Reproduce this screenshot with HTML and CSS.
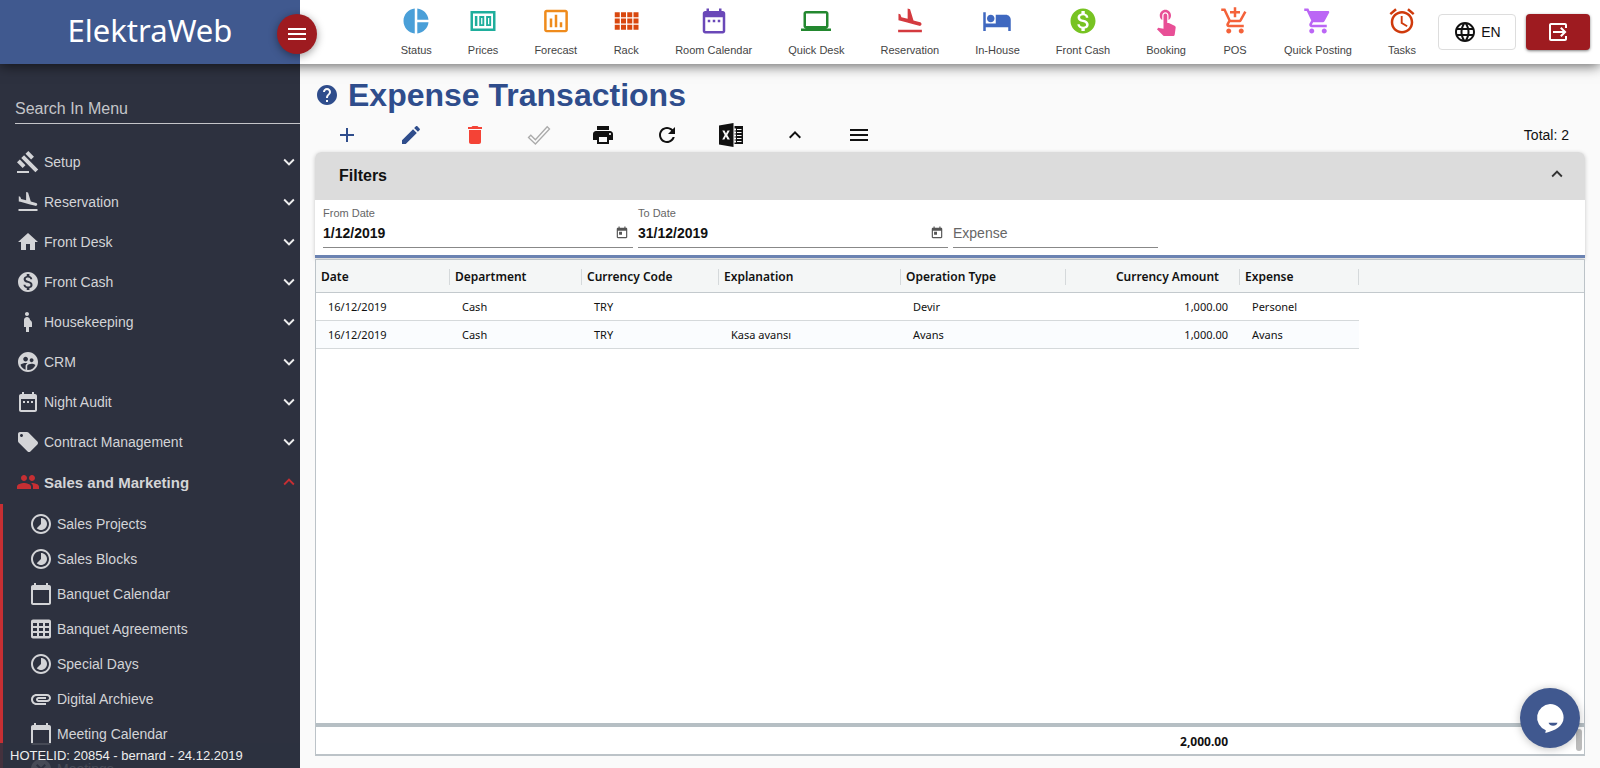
FILE: index.html
```html
<!DOCTYPE html>
<html lang="en">

<head>
  <meta charset="UTF-8">
  <meta name="viewport" content="width=device-width, initial-scale=1.0">
  <title>ElektraWeb - Expense Transactions</title>
  <link rel="stylesheet" href="styles.css">
</head>

<body>

  <!-- icons -->
  <svg class="sprite" aria-hidden="true">
    <symbol id="i-menu" viewBox="0 0 24 24"><path d="M3 18h18v-2H3v2zm0-5h18v-2H3v2zm0-7v2h18V6H3z"/></symbol>
    <symbol id="i-status" viewBox="0 0 24 24"><path d="M11 2v20c-5.07-.5-9-4.79-9-10s3.93-9.5 9-10zm2.03 0v8.99H22c-.47-4.74-4.24-8.52-8.97-8.99zm0 11.01V22c4.74-.47 8.5-4.25 8.97-8.99h-8.97z"/></symbol>
    <symbol id="i-prices" viewBox="0 0 24 24"><path fill-rule="evenodd" d="M2 4h20v16H2zM4 6v12h16V6zM5.500 8h2v8h-2zM9 8h4v8H9zM10.500 9.500v5h1v-5zM14.500 8h4v8h-4zM16 9.500v5h1v-5z"/></symbol>
    <symbol id="i-forecast" viewBox="0 0 24 24"><path d="M9 17H7v-7h2v7zm4 0h-2V7h2v10zm4 0h-2v-4h2v4zm2.500 2.100h-15V5h15v14.100zm0-16.100h-15c-1.100 0-2 .9-2 2v14c0 1.100.9 2 2 2h15c1.100 0 2-.9 2-2V5c0-1.100-.9-2-2-2z"/></symbol>
    <symbol id="i-rack" viewBox="0 0 24 24"><path d="M3 9h4V5H3v4zm0 5h4v-4H3v4zm5 0h4v-4H8v4zm5 0h4v-4h-4v4zM8 9h4V5H8v4zm5-4v4h4V5h-4zm5 9h4v-4h-4v4zM3 19h4v-4H3v4zm5 0h4v-4H8v4zm5 0h4v-4h-4v4zm5 0h4v-4h-4v4zm0-14v4h4V5h-4z"/></symbol>
    <symbol id="i-date-range" viewBox="0 0 24 24"><path d="M9 11H7v2h2v-2zm4 0h-2v2h2v-2zm4 0h-2v2h2v-2zm2-7h-1V2h-2v2H8V2H6v2H5c-1.110 0-1.990.9-1.990 2L3 20c0 1.100.89 2 2 2h14c1.100 0 2-.9 2-2V6c0-1.100-.9-2-2-2zm0 16H5V9h14v11z"/></symbol>
    <symbol id="i-laptop" viewBox="0 0 24 24"><path d="M20 18c1.100 0 1.990-.9 1.990-2L22 6c0-1.100-.9-2-2-2H4c-1.100 0-2 .9-2 2v10c0 1.100.9 2 2 2H0v2h24v-2h-4zM4 6h16v10H4V6z"/></symbol>
    <symbol id="i-flight" viewBox="0 0 24 24"><path d="M2.500 19h19v2h-19zm7.180-5.730l4.350 1.160 5.310 1.420c.8.21 1.620-.26 1.840-1.060.21-.8-.26-1.620-1.060-1.840l-5.310-1.420-2.760-9.020L10.120 2v8.280L5.150 8.950l-.93-2.320-1.450-.39v5.170l1.600.43 5.310 1.430z"/></symbol>
    <symbol id="i-hotel" viewBox="0 0 24 24"><path d="M7 13c1.660 0 3-1.340 3-3S8.660 7 7 7s-3 1.340-3 3 1.340 3 3 3zm12-6h-8v7H3V5H1v15h2v-3h18v3h2v-9c0-2.210-1.790-4-4-4z"/></symbol>
    <symbol id="i-money" viewBox="0 0 24 24"><path d="M12 2C6.480 2 2 6.480 2 12s4.480 10 10 10 10-4.480 10-10S17.520 2 12 2zm1.410 16.090V20h-2.670v-1.930c-1.710-.36-3.160-1.460-3.270-3.400h1.960c.1 1.050.82 1.870 2.650 1.870 1.960 0 2.400-.98 2.400-1.590 0-.83-.44-1.610-2.670-2.140-2.480-.6-4.180-1.620-4.180-3.670 0-1.720 1.390-2.840 3.110-3.210V4h2.670v1.950c1.860.45 2.790 1.860 2.850 3.390H14.300c-.05-1.110-.64-1.870-2.220-1.870-1.500 0-2.400.68-2.400 1.640 0 .84.65 1.390 2.670 1.910s4.180 1.390 4.180 3.910c-.01 1.830-1.380 2.830-3.120 3.160z"/></symbol>
    <symbol id="i-touch" viewBox="0 0 24 24"><path d="M9 11.240V7.500C9 6.120 10.120 5 11.500 5S14 6.120 14 7.500v3.740c1.210-.81 2-2.180 2-3.740C16 5.010 13.990 3 11.500 3S7 5.010 7 7.500c0 1.560.79 2.930 2 3.740zm9.840 4.630l-4.540-2.260c-.17-.07-.35-.11-.54-.11H13v-6c0-.83-.67-1.500-1.500-1.500S10 6.670 10 7.500v10.740l-3.430-.72c-.08-.01-.15-.03-.24-.03-.31 0-.59.13-.79.33l-.79.8 4.940 4.940c.27.27.65.44 1.060.44h6.790c.75 0 1.330-.55 1.440-1.280l.75-5.270c.01-.07.02-.14.02-.2 0-.62-.38-1.160-.91-1.380z"/></symbol>
    <symbol id="i-cart-add" viewBox="0 0 24 24"><path d="M11 9h2V6h3V4h-3V1h-2v3H8v2h3v3zm-4 9c-1.100 0-1.990.9-1.990 2S5.900 22 7 22s2-.9 2-2-.9-2-2-2zm10 0c-1.100 0-1.990.9-1.990 2s.89 2 1.990 2 2-.9 2-2-.9-2-2-2zm-9.830-3.250l.03-.12.9-1.630h7.450c.75 0 1.410-.41 1.750-1.030l3.860-7.010L19.420 4h-.01l-1.100 2-2.760 5H8.530l-.13-.27L6.160 6l-.95-2-.94-2H1v2h2l3.600 7.590-1.350 2.450c-.16.28-.25.61-.25.96 0 1.100.9 2 2 2h12v-2H7.420c-.13 0-.25-.11-.25-.25z"/></symbol>
    <symbol id="i-cart" viewBox="0 0 24 24"><path d="M7 18c-1.100 0-1.990.9-1.990 2S5.900 22 7 22s2-.9 2-2-.9-2-2-2zM1 2v2h2l3.600 7.590-1.350 2.450c-.16.28-.25.61-.25.96 0 1.100.9 2 2 2h12v-2H7.420c-.14 0-.25-.11-.25-.25l.03-.12.9-1.630h7.450c.75 0 1.410-.41 1.750-1.030l3.580-6.490c.08-.14.12-.31.12-.48 0-.55-.45-1-1-1H5.210l-.94-2H1zm16 16c-1.100 0-1.990.9-1.990 2s.89 2 1.990 2 2-.9 2-2-.9-2-2-2z"/></symbol>
    <symbol id="i-alarm" viewBox="0 0 24 24"><path d="M22 5.720l-4.600-3.860-1.290 1.530 4.600 3.860L22 5.720zM7.880 3.390L6.600 1.860 2 5.710l1.290 1.530 4.590-3.850zM12.500 8H11v6l4.750 2.850.75-1.230-4-2.370V8zM12 4c-4.970 0-9 4.030-9 9s4.020 9 9 9c4.970 0 9-4.030 9-9s-4.030-9-9-9zm0 16c-3.870 0-7-3.130-7-7s3.130-7 7-7 7 3.130 7 7-3.130 7-7 7z"/></symbol>
    <symbol id="i-globe" viewBox="0 0 24 24"><path d="M11.990 2C6.470 2 2 6.480 2 12s4.470 10 9.990 10C17.520 22 22 17.520 22 12S17.520 2 11.990 2zm6.930 6h-2.950c-.32-1.250-.78-2.450-1.380-3.560 1.840.63 3.370 1.910 4.330 3.560zM12 4.040c.83 1.200 1.480 2.530 1.910 3.960h-3.820c.43-1.430 1.080-2.760 1.910-3.960zM4.260 14C4.100 13.360 4 12.690 4 12s.1-1.360.26-2h3.380c-.08.66-.14 1.320-.14 2 0 .68.06 1.340.14 2H4.260zm.82 2h2.950c.32 1.250.78 2.450 1.380 3.560-1.840-.63-3.370-1.900-4.330-3.560zm2.950-8H5.080c.96-1.660 2.490-2.930 4.330-3.560C8.810 5.550 8.350 6.750 8.030 8zM12 19.960c-.83-1.200-1.480-2.530-1.910-3.960h3.820c-.43 1.430-1.080 2.760-1.910 3.960zM14.340 14H9.660c-.09-.66-.16-1.320-.16-2 0-.68.07-1.350.16-2h4.680c.09.65.16 1.320.16 2 0 .68-.07 1.340-.16 2zm.25 5.560c.6-1.110 1.060-2.310 1.380-3.560h2.950c-.96 1.650-2.490 2.930-4.330 3.560zM16.360 14c.08-.66.14-1.320.14-2 0-.68-.06-1.340-.14-2h3.380c.16.64.26 1.310.26 2s-.1 1.360-.26 2h-3.380z"/></symbol>
    <symbol id="i-exit" viewBox="0 0 24 24"><path d="M14.100 15.600l1.400 1.400 5-5-5-5-1.400 1.400 2.600 2.600H7v2h9.700zM5 3c-1.100 0-2 .9-2 2v14c0 1.100.9 2 2 2h14c1.100 0 2-.9 2-2v-3h-2v3H5V5h14v3h2V5c0-1.100-.9-2-2-2z"/></symbol>
    <symbol id="i-help" viewBox="0 0 24 24"><path d="M12 2C6.480 2 2 6.480 2 12s4.480 10 10 10 10-4.480 10-10S17.520 2 12 2zm1 17h-2v-2h2v2zm2.070-7.750l-.9.920C13.450 12.900 13 13.500 13 15h-2v-.5c0-1.100.45-2.100 1.170-2.830l1.240-1.260c.37-.36.59-.86.59-1.410 0-1.100-.9-2-2-2s-2 .9-2 2H8c0-2.210 1.790-4 4-4s4 1.790 4 4c0 .88-.36 1.680-.93 2.250z"/></symbol>
    <symbol id="i-add" viewBox="0 0 24 24"><path d="M19 13h-6v6h-2v-6H5v-2h6V5h2v6h6v2z"/></symbol>
    <symbol id="i-edit" viewBox="0 0 24 24"><path d="M3 17.250V21h3.750L17.810 9.940l-3.750-3.750L3 17.250zM20.710 7.040c.39-.39.39-1.020 0-1.410l-2.340-2.340c-.39-.39-1.020-.39-1.410 0l-1.830 1.830 3.750 3.750 1.830-1.830z"/></symbol>
    <symbol id="i-delete" viewBox="0 0 24 24"><path d="M6 19c0 1.100.9 2 2 2h8c1.100 0 2-.9 2-2V7H6v12zM19 4h-3.500l-1-1h-5l-1 1H5v2h14V4z"/></symbol>
    <symbol id="i-check" viewBox="0 0 24 24"><path fill="none" stroke="currentColor" stroke-width="1.300" d="M1.500 14.500l2.300-2.300 4.600 4.600L20.200 3.800l2.300 2.200L8.400 21z"/></symbol>
    <symbol id="i-print" viewBox="0 0 24 24"><path d="M19 8H5c-1.660 0-3 1.340-3 3v6h4v4h12v-4h4v-6c0-1.660-1.340-3-3-3zm-3 11H8v-5h8v5zm3-7c-.55 0-1-.45-1-1s.45-1 1-1 1 .45 1 1-.45 1-1 1zm-1-9H6v4h12V3z"/></symbol>
    <symbol id="i-refresh" viewBox="0 0 24 24"><path d="M17.650 6.350C16.200 4.900 14.210 4 12 4c-4.420 0-7.990 3.580-7.990 8s3.570 8 7.990 8c3.730 0 6.840-2.550 7.730-6h-2.080c-.82 2.330-3.040 4-5.650 4-3.310 0-6-2.690-6-6s2.690-6 6-6c1.660 0 3.140.69 4.220 1.780L13 11h7V4l-2.350 2.350z"/></symbol>
    <symbol id="i-excel" viewBox="0 0 24 24"><path fill-rule="evenodd" d="M0 2.500L14.500 0v24L0 21.500zM3.300 7.600l2.400 4.400-2.500 4.400h2.200l1.500-2.900 1.600 3h2.400L8.300 12l2.500-4.600H8.500L7 10.400 5.500 7.600zM15.500 3H24v18h-8.500v-1.500H17v-2h-1.500v-1H17v-2h-1.500v-1H17v-2h-1.500v-1H17v-2h-1.500v-1H17v-2h-1.500zM18 6v1h4.500v-1zM18 9v1h4.500v-1zM18 12v1h4.500v-1zM18 15v1h4.500v-1zM18 18v1h4.500v-1z"/></symbol>
    <symbol id="i-up" viewBox="0 0 24 24"><path d="M12 8l-6 6 1.410 1.410L12 10.830l4.590 4.580L18 14z"/></symbol>
    <symbol id="i-down" viewBox="0 0 24 24"><path d="M16.590 8.590L12 13.170 7.410 8.590 6 10l6 6 6-6z"/></symbol>
    <symbol id="i-gavel" viewBox="0 0 24 24"><path d="M1 21h12v2H1zM5.245 8.070l2.830-2.827 14.140 14.142-2.828 2.828zM12.317 1l5.657 5.656-2.830 2.830-5.654-5.660zM3.825 9.485l5.657 5.657-2.828 2.828-5.657-5.657z"/></symbol>
    <symbol id="i-home" viewBox="0 0 24 24"><path d="M10 20v-6h4v6h5v-8h3L12 3 2 12h3v8z"/></symbol>
    <symbol id="i-woman" viewBox="0 0 24 24"><path d="M9 4c0-1.110.89-2 2-2s2 .89 2 2-.89 2-2 2-2-.89-2-2zm7 9c-.01-1.340-.83-2.510-2-3 0-1.660-1.340-3-3-3s-3 1.340-3 3v7h2v5h3v-5h3v-4z"/></symbol>
    <symbol id="i-crm" viewBox="0 0 24 24"><path d="M11.990 2c-5.520 0-10 4.480-10 10s4.480 10 10 10 10-4.480 10-10-4.480-10-10-10zm3.610 6.340c1.070 0 1.930.86 1.930 1.930 0 1.070-.86 1.930-1.930 1.930-1.070 0-1.930-.86-1.930-1.930-.01-1.070.86-1.930 1.930-1.930zm-6-1.580c1.300 0 2.360 1.060 2.360 2.360 0 1.300-1.060 2.360-2.360 2.360s-2.360-1.060-2.360-2.360c0-1.310 1.050-2.360 2.360-2.360zm0 9.130v3.750c-2.400-.75-4.300-2.600-5.140-4.960 1.050-1.120 3.670-1.690 5.140-1.690.53 0 1.200.08 1.900.22-1.640.87-1.900 2.020-1.900 2.680zM11.990 20c-.27 0-.53-.01-.79-.04v-4.070c0-1.420 2.940-2.130 4.400-2.130 1.070 0 2.920.39 3.840 1.150-1.170 2.970-4.060 5.090-7.450 5.090z"/></symbol>
    <symbol id="i-tag" viewBox="0 0 24 24"><path d="M21.410 11.580l-9-9C12.050 2.220 11.550 2 11 2H4c-1.100 0-2 .9-2 2v7c0 .55.22 1.050.59 1.420l9 9c.36.36.86.58 1.410.58.55 0 1.050-.22 1.410-.59l7-7c.37-.36.59-.86.59-1.410 0-.55-.23-1.060-.59-1.420zM5.500 7C4.670 7 4 6.330 4 5.500S4.670 4 5.500 4 7 4.670 7 5.500 6.330 7 5.500 7z"/></symbol>
    <symbol id="i-people" viewBox="0 0 24 24"><path d="M16 11c1.660 0 2.990-1.340 2.990-3S17.660 5 16 5c-1.660 0-3 1.340-3 3s1.340 3 3 3zm-8 0c1.660 0 2.990-1.340 2.990-3S9.660 5 8 5C6.340 5 5 6.340 5 8s1.340 3 3 3zm0 2c-2.330 0-7 1.170-7 3.500V19h14v-2.500c0-2.330-4.670-3.500-7-3.500zm8 0c-.29 0-.62.02-.97.05 1.160.84 1.970 1.970 1.970 3.450V19h6v-2.500c0-2.330-4.670-3.500-7-3.500z"/></symbol>
    <symbol id="i-timelapse" viewBox="0 0 24 24"><path d="M16.240 7.760C15.070 6.590 13.540 6 12 6v6l-4.240 4.240c2.340 2.340 6.140 2.340 8.490 0 2.340-2.340 2.340-6.140-.01-8.480zM12 2C6.480 2 2 6.480 2 12s4.480 10 10 10 10-4.480 10-10S17.520 2 12 2zm0 18c-4.420 0-8-3.580-8-8s3.580-8 8-8 8 3.580 8 8-3.580 8-8 8z"/></symbol>
    <symbol id="i-calendar" viewBox="0 0 24 24"><path d="M20 3h-1V1h-2v2H7V1H5v2H4c-1.100 0-2 .9-2 2v16c0 1.100.9 2 2 2h16c1.100 0 2-.9 2-2V5c0-1.100-.9-2-2-2zm0 18H4V8h16v13z"/></symbol>
    <symbol id="i-table" viewBox="0 0 24 24"><path fill-rule="evenodd" d="M4 2.500h16c1.100 0 2 .9 2 2v15c0 1.100-.9 2-2 2H4c-1.100 0-2-.9-2-2v-15c0-1.100.9-2 2-2zM4 6v3h4V6zM10 6v3h4V6zM16 6v3h4V6zM4 11v3h4v-3zM10 11v3h4v-3zM16 11v3h4v-3zM4 16v3h4v-3zM10 16v3h4v-3zM16 16v3h4v-3z"/></symbol>
    <symbol id="i-attach" viewBox="0 0 24 24"><path d="M2 12.500C2 9.460 4.460 7 7.500 7H18c2.210 0 4 1.790 4 4s-1.790 4-4 4H9.500C8.120 15 7 13.880 7 12.500S8.120 10 9.500 10H17v2H9.410c-.55 0-.55 1 0 1H18c1.100 0 2-.9 2-2s-.9-2-2-2H7.500C5.570 9 4 10.570 4 12.500S5.570 16 7.500 16H17v2H7.500C4.460 18 2 15.540 2 12.500z"/></symbol>
    <symbol id="i-event" viewBox="0 0 24 24"><path d="M19 3h-1V1h-2v2H8V1H6v2H5c-1.100 0-2 .9-2 2v14c0 1.100.9 2 2 2h14c1.100 0 2-.9 2-2V5c0-1.100-.9-2-2-2zm0 16H5V8h14v11zM7 10h5v5H7z"/></symbol>
    <symbol id="i-cancel" viewBox="0 0 24 24"><path d="M12 2C6.500 2 2 6.500 2 12s4.500 10 10 10 10-4.500 10-10S17.500 2 12 2zm5 13.600L15.600 17 12 13.400 8.400 17 7 15.600l3.600-3.600L7 8.400 8.400 7l3.600 3.600L15.600 7 17 8.400 13.400 12z"/></symbol>
    <symbol id="i-chat" viewBox="0 0 32 32"><path fill="#fff" d="M16 1a14.500 14.500 0 0 1 14.500 14.500C30.500 25 21 29.500 11 32l.5-3A14.500 14.500 0 0 1 16 1z"/><path fill="#40588f" d="M14.500 21h9.500c-.5 2-2.300 3.200-4.700 3.200S15 23 14.500 21z"/></symbol>
  </svg>

  <header class="topbar">
    <a class="brand" href="#">ElektraWeb</a>
    <button class="menu-toggle" type="button" aria-label="Menu"><svg class="icon"><use href="#i-menu"/></svg></button>
    <nav class="shortcuts">
      <a class="status" href="#"><svg class="icon-lg"><use href="#i-status"/></svg>Status</a>
      <a class="prices" href="#"><svg class="icon-lg"><use href="#i-prices"/></svg>Prices</a>
      <a class="forecast" href="#"><svg class="icon-lg"><use href="#i-forecast"/></svg>Forecast</a>
      <a class="rack" href="#"><svg class="icon-lg"><use href="#i-rack"/></svg>Rack</a>
      <a class="room-calendar" href="#"><svg class="icon-lg"><use href="#i-date-range"/></svg>Room Calendar</a>
      <a class="quick-desk" href="#"><svg class="icon-lg"><use href="#i-laptop"/></svg>Quick Desk</a>
      <a class="reservation" href="#"><svg class="icon-lg"><use href="#i-flight"/></svg>Reservation</a>
      <a class="in-house" href="#"><svg class="icon-lg"><use href="#i-hotel"/></svg>In-House</a>
      <a class="front-cash" href="#"><svg class="icon-lg"><use href="#i-money"/></svg>Front Cash</a>
      <a class="booking" href="#"><svg class="icon-lg"><use href="#i-touch"/></svg>Booking</a>
      <a class="pos" href="#"><svg class="icon-lg"><use href="#i-cart-add"/></svg>POS</a>
      <a class="quick-posting" href="#"><svg class="icon-lg"><use href="#i-cart"/></svg>Quick Posting</a>
      <a class="tasks" href="#"><svg class="icon-lg"><use href="#i-alarm"/></svg>Tasks</a>
    </nav>
    <button class="btn-lang" type="button"><svg class="icon"><use href="#i-globe"/></svg>EN</button>
    <button class="btn-exit" type="button" aria-label="Log out"><svg class="icon"><use href="#i-exit"/></svg></button>
  </header>

  <div class="layout">
    <aside class="sidebar">
      <input class="menu-search" type="text" placeholder="Search In Menu" aria-label="Search In Menu">
      <ul class="menu">
        <li><a href="#"><svg class="icon"><use href="#i-gavel"/></svg>Setup<svg class="arrow"><use href="#i-down"/></svg></a></li>
        <li><a href="#"><svg class="icon"><use href="#i-flight"/></svg>Reservation<svg class="arrow"><use href="#i-down"/></svg></a></li>
        <li><a href="#"><svg class="icon"><use href="#i-home"/></svg>Front Desk<svg class="arrow"><use href="#i-down"/></svg></a></li>
        <li><a href="#"><svg class="icon"><use href="#i-money"/></svg>Front Cash<svg class="arrow"><use href="#i-down"/></svg></a></li>
        <li><a href="#"><svg class="icon"><use href="#i-woman"/></svg>Housekeeping<svg class="arrow"><use href="#i-down"/></svg></a></li>
        <li><a href="#"><svg class="icon"><use href="#i-crm"/></svg>CRM<svg class="arrow"><use href="#i-down"/></svg></a></li>
        <li><a href="#"><svg class="icon"><use href="#i-date-range"/></svg>Night Audit<svg class="arrow"><use href="#i-down"/></svg></a></li>
        <li><a href="#"><svg class="icon"><use href="#i-tag"/></svg>Contract Management<svg class="arrow"><use href="#i-down"/></svg></a></li>
        <li class="open"><a href="#"><svg class="icon"><use href="#i-people"/></svg>Sales and Marketing<svg class="arrow"><use href="#i-up"/></svg></a></li>
      </ul>
      <ul class="submenu">
        <li><a href="#"><svg class="icon"><use href="#i-timelapse"/></svg>Sales Projects</a></li>
        <li><a href="#"><svg class="icon"><use href="#i-timelapse"/></svg>Sales Blocks</a></li>
        <li><a href="#"><svg class="icon"><use href="#i-calendar"/></svg>Banquet Calendar</a></li>
        <li><a href="#"><svg class="icon"><use href="#i-table"/></svg>Banquet Agreements</a></li>
        <li><a href="#"><svg class="icon"><use href="#i-timelapse"/></svg>Special Days</a></li>
        <li><a href="#"><svg class="icon"><use href="#i-attach"/></svg>Digital Archieve</a></li>
        <li><a href="#"><svg class="icon"><use href="#i-calendar"/></svg>Meeting Calendar</a></li>
        <li><a href="#"><svg class="icon"><use href="#i-cancel"/></svg>Meetings</a></li>
      </ul>
      <div class="hotel-info">HOTELID: 20854 - bernard - 24.12.2019</div>
    </aside>

    <main class="content">
      <div class="page-title">
        <svg class="icon"><use href="#i-help"/></svg>
        <h1>Expense Transactions</h1>
      </div>

      <div class="toolbar">
        <button class="blue" type="button" aria-label="Add"><svg class="icon"><use href="#i-add"/></svg></button>
        <button class="blue" type="button" aria-label="Edit"><svg class="icon"><use href="#i-edit"/></svg></button>
        <button class="red" type="button" aria-label="Delete"><svg class="icon"><use href="#i-delete"/></svg></button>
        <button class="grey" type="button" aria-label="Approve"><svg class="icon"><use href="#i-check"/></svg></button>
        <button type="button" aria-label="Print"><svg class="icon"><use href="#i-print"/></svg></button>
        <button type="button" aria-label="Refresh"><svg class="icon"><use href="#i-refresh"/></svg></button>
        <button type="button" aria-label="Export to Excel"><svg class="icon"><use href="#i-excel"/></svg></button>
        <button type="button" aria-label="Collapse"><svg class="icon"><use href="#i-up"/></svg></button>
        <button type="button" aria-label="More"><svg class="icon"><use href="#i-menu"/></svg></button>
        <span class="total">Total: 2</span>
      </div>

      <section class="filters">
        <div class="filters-head">
          <h2>Filters</h2>
          <button type="button" aria-label="Hide filters"><svg class="arrow"><use href="#i-up"/></svg></button>
        </div>
        <form class="filters-body" action="#">
          <div class="field">
            <label for="from">From Date</label>
            <div class="control">
              <input type="text" id="from" value="1/12/2019">
              <svg class="icon-sm"><use href="#i-event"/></svg>
            </div>
          </div>
          <div class="field">
            <label for="to">To Date</label>
            <div class="control">
              <input type="text" id="to" value="31/12/2019">
              <svg class="icon-sm"><use href="#i-event"/></svg>
            </div>
          </div>
          <div class="field small">
            <div class="control">
              <input type="text" id="expense" placeholder="Expense" aria-label="Expense">
            </div>
          </div>
        </form>
      </section>

      <section class="grid">
        <div class="grid-body">
          <table>
            <colgroup>
              <col class="c-date"><col class="c-dep"><col class="c-cur"><col class="c-exp"><col class="c-type"><col class="c-amount"><col class="c-expense"><col>
            </colgroup>
            <thead>
              <tr>
                <th><span>Date</span></th>
                <th><span>Department</span></th>
                <th><span>Currency Code</span></th>
                <th><span>Explanation</span></th>
                <th><span>Operation Type</span></th>
                <th class="num"><span>Currency Amount</span></th>
                <th><span>Expense</span></th>
                <th></th>
              </tr>
            </thead>
            <tbody>
              <tr>
                <td>16/12/2019</td>
                <td>Cash</td>
                <td>TRY</td>
                <td></td>
                <td>Devir</td>
                <td class="num">1,000.00</td>
                <td>Personel</td>
              </tr>
              <tr>
                <td>16/12/2019</td>
                <td>Cash</td>
                <td>TRY</td>
                <td>Kasa avansı</td>
                <td>Avans</td>
                <td class="num">1,000.00</td>
                <td>Avans</td>
              </tr>
            </tbody>
          </table>
        </div>
        <div class="grid-total">
          <span>2,000.00</span>
          <i class="scroll-thumb"></i>
        </div>
      </section>
    </main>
  </div>

  <button class="chat" type="button" aria-label="Chat"><svg><use href="#i-chat"/></svg></button>

</body>

</html>
```
FILE: styles.css
```css
* {
  box-sizing: border-box;
}

body {
  margin: 0;
  height: 100vh;
  display: flex;
  flex-direction: column;
  overflow: hidden;
  background-color: #fafafa;
  color: #111;
  font-family: "Liberation Sans", Arial, sans-serif;
  font-size: 14px;
}

a {
  color: inherit;
  text-decoration: none;
}

button {
  display: flex;
  align-items: center;
  justify-content: center;
  padding: 0;
  border: none;
  background: none;
  color: inherit;
  font: inherit;
  cursor: pointer;
}

input {
  min-width: 0;
  padding: 0;
  border: none;
  outline: none;
  background: none;
  color: inherit;
  font: inherit;
}

ul {
  list-style-type: none;
  margin: 0;
  padding: 0;
}

svg {
  flex: none;
  fill: currentColor;
}

.sprite {
  position: absolute;
  width: 0;
  height: 0;
}

.icon {
  width: 24px;
  height: 24px;
}

.icon-lg {
  width: 30px;
  height: 30px;
}

.icon-sm {
  width: 14px;
  height: 14px;
  color: #555;
}

.arrow {
  width: 22px;
  height: 22px;
}

/* top bar */

.topbar {
  position: relative;
  z-index: 2;
  flex: none;
  display: flex;
  height: 64px;
  padding-right: 10px;
  background-color: #fff;
  box-shadow: 0 2px 12px rgba(0, 0, 0, 0.6);
}

.brand {
  flex: none;
  width: 300px;
  background-color: #40598f;
  color: #fff;
  font-family: "Noto Sans", sans-serif;
  font-size: 31px;
  line-height: 60px;
  text-align: center;
}

.menu-toggle {
  position: absolute;
  top: 14px;
  left: 277px;
  width: 40px;
  height: 40px;
  border-radius: 50%;
  background-color: #9e1b20;
  color: #fff;
  box-shadow: 0 2px 8px rgba(0, 0, 0, 0.4);
}

.shortcuts {
  flex: 1;
  display: flex;
  justify-content: flex-end;
  gap: 36px;
  margin-right: 22px;
}

.shortcuts a {
  display: flex;
  flex-direction: column;
  align-items: center;
  gap: 6px;
  padding-top: 6px;
  color: #444;
  font-size: 11px;
  line-height: 16px;
  white-space: nowrap;
}

.shortcuts svg {
  margin: 0 -2px;
}

.status svg { color: #4a9fd8; }
.prices svg { color: #1fae9c; }
.forecast svg { color: #ef8b1c; }
.rack svg { color: #d9480f; }
.room-calendar svg { color: #6a48b8; }
.quick-desk svg { color: #23882f; }
.reservation svg { color: #d43a3f; }
.in-house svg { color: #3f68c0; }
.front-cash svg { color: #77c322; }
.booking svg { color: #e84f96; }
.pos svg { color: #f4623a; }
.quick-posting svg { color: #bb66f5; }
.tasks svg { color: #cf3a0c; }

.btn-lang {
  gap: 4px;
  width: 78px;
  height: 36px;
  margin-top: 14px;
  border: 1px solid #ddd;
  border-radius: 4px;
}

.btn-exit {
  width: 64px;
  height: 36px;
  margin: 14px 0 0 10px;
  border-radius: 4px;
  background-color: #9e1b20;
  color: #fff;
  box-shadow: 0 1px 3px rgba(0, 0, 0, 0.5);
}

/* sidebar */

.layout {
  flex: 1;
  display: flex;
  min-height: 0;
}

.sidebar {
  position: relative;
  flex: none;
  width: 300px;
  overflow: hidden;
  background-color: #2d313f;
  color: #d3d4d7;
}

.menu-search {
  display: block;
  width: 285px;
  height: 30px;
  margin: 30px 0 18px 15px;
  border-bottom: 1px solid #c4c5c9;
  font-size: 16px;
}

.menu-search::placeholder {
  color: #c4c5c9;
  opacity: 1;
}

.menu a {
  display: flex;
  align-items: center;
  gap: 4px;
  height: 40px;
  padding-left: 16px;
}

.menu .arrow {
  margin-left: auto;
  color: #eee;
}

.menu .open {
  font-size: 15px;
  font-weight: bold;
}

.menu .open svg {
  color: #c62f33;
}

.submenu {
  margin-top: 2px;
  padding-top: 2px;
  border-left: 3px solid #c62f33;
}

.submenu a {
  display: flex;
  align-items: center;
  gap: 4px;
  height: 35px;
  padding-left: 26px;
}

.hotel-info {
  position: absolute;
  bottom: 0;
  left: 0;
  width: 100%;
  height: 25px;
  padding-left: 10px;
  background-color: rgba(45, 49, 63, 0.85);
  color: #eee;
  font-size: 13px;
  line-height: 25px;
}

/* content */

.content {
  flex: 1;
  display: flex;
  flex-direction: column;
  min-width: 0;
  padding: 12px 15px 12px;
}

.page-title {
  display: flex;
  align-items: center;
  gap: 9px;
  height: 38px;
  color: #2f4d8c;
}

.page-title h1 {
  margin: 0;
  font-size: 32px;
  line-height: 38px;
}

.toolbar {
  display: flex;
  align-items: center;
  height: 38px;
  padding-top: 4px;
}

.toolbar button {
  width: 64px;
  height: 34px;
}

.toolbar .blue { color: #2f4d8c; }
.toolbar .red { color: #f44336; }
.toolbar .grey { color: #aaa; }

.total {
  margin-left: auto;
  padding-right: 16px;
}

.filters {
  border-bottom: 3px solid #6b83b2;
  border-radius: 6px 6px 0 0;
  background-color: #fff;
  box-shadow: 0 1px 4px rgba(0, 0, 0, 0.2);
}

.filters-head {
  display: flex;
  align-items: center;
  justify-content: space-between;
  height: 48px;
  padding: 0 17px 0 24px;
  border-radius: 6px 6px 0 0;
  background-color: #dcdcdc;
}

.filters-head h2 {
  margin: 0;
  font-size: 16px;
}

.filters-head button {
  padding-bottom: 4px;
  color: #333;
}

.filters-body {
  display: grid;
  grid-template-columns: 3fr 3fr 2fr 4fr;
  padding: 4px 2px 7px 8px;
}

.field {
  display: flex;
  flex-direction: column;
  padding-right: 5px;
}

.field label {
  color: #666;
  font-size: 11px;
  line-height: 18px;
}

.control {
  display: flex;
  align-items: center;
  height: 26px;
  padding: 0 4px 4px 0;
  border-bottom: 1px solid #888;
}

.control input {
  flex: 1;
  font-weight: bold;
}

.small {
  justify-content: flex-end;
}

.control #expense {
  font-weight: normal;
}

.small input::placeholder {
  color: #666;
  opacity: 1;
}

/* data grid */

.grid {
  flex: 1;
  display: flex;
  flex-direction: column;
  min-height: 0;
  margin-top: 1px;
  border: 1px solid #bcc3c8;
  border-width: 1px 1px 2px;
  background-color: #fff;
  font-family: "Noto Sans", sans-serif;
}

.grid-body {
  flex: 1;
  overflow: hidden;
}

table {
  width: 100%;
  table-layout: fixed;
  border-collapse: collapse;
}

.c-date { width: 134px; }
.c-dep { width: 132px; }
.c-cur { width: 137px; }
.c-exp { width: 182px; }
.c-type { width: 165px; }
.c-amount { width: 174px; }
.c-expense { width: 119px; }

thead tr {
  height: 32px;
  border-bottom: 1px solid #c3c9cd;
  background-color: #f4f6f6;
}

th {
  padding: 2px 0 0;
  font-size: 12px;
  font-weight: 600;
  line-height: 16px;
  text-align: left;
}

th span {
  display: block;
  padding-left: 5px;
  border-right: 1px solid #d5d9db;
}

th.num span {
  padding-right: 20px;
}

td {
  height: 28px;
  padding: 2px 12px 0;
  border-bottom: 1px solid #d5d9db;
  font-size: 11px;
  line-height: 16px;
}

tbody tr:nth-child(even) td {
  background-color: #fafcfe;
}

.num {
  text-align: right;
}

.grid-total {
  position: relative;
  height: 31px;
  padding-top: 2px;
  border-top: 4px solid #b6bfc4;
  font-size: 12px;
  font-weight: bold;
  line-height: 25px;
}

/* lines up with the amount column */
.grid-total span {
  display: block;
  width: 924px;
  padding-right: 12px;
  text-align: right;
}

.scroll-thumb {
  position: absolute;
  top: 2px;
  right: 2px;
  width: 6px;
  height: 22px;
  border-radius: 3px;
  background-color: #bbb;
}

.chat {
  position: absolute;
  z-index: 3;
  right: 20px;
  bottom: 20px;
  width: 60px;
  height: 60px;
  border-radius: 50%;
  background-color: #40588f;
  box-shadow: 0 1px 8px rgba(0, 0, 0, 0.25);
}

.chat svg {
  width: 30px;
  height: 30px;
}
```
